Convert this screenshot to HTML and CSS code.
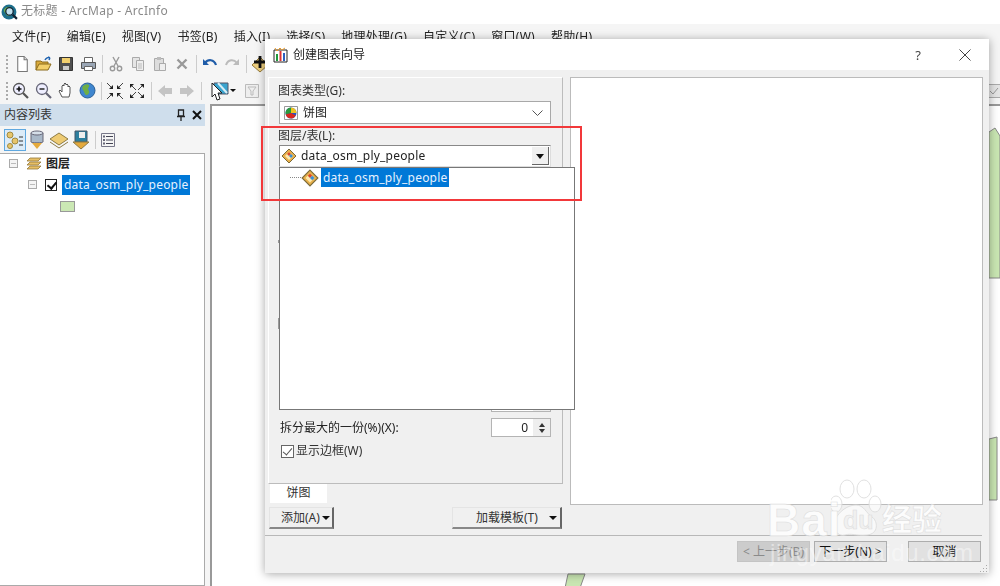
FILE: index.html
```html
<!DOCTYPE html>
<html lang="zh">
<head>
<meta charset="utf-8">
<title>无标题 - ArcMap - ArcInfo</title>
<link rel="stylesheet" href="styles.css">
</head>
<body>
<svg class="defs" width="0" height="0">
  <defs>
    <symbol id="diamond" viewBox="0 0 16 16"><path d="M8 1 15 8 8 15 1 8Z" fill="#e8b04a" stroke="#7a6a3a"/><path d="M8 4 12 8 8 12 4 8Z" fill="#fbe9b0"/><path d="M8 4 10 6 8 8 6 6Z" fill="#d9482b"/><path d="M10 6 12 8 10 10 8 8Z" fill="#3c8fd0"/></symbol>
    <symbol id="corner-in" viewBox="0 0 7 7"><path d="M0 0 4 4" stroke="#444" stroke-width="1"/><path d="M6 2v4H2Z" fill="#222"/></symbol>
    <symbol id="corner-out" viewBox="0 0 7 7"><path d="M7 7 3 3" stroke="#444" stroke-width="1"/><path d="M1 5V1h4Z" fill="#222"/></symbol>
  </defs>
</svg>
<div class="app">
  <header class="titlebar">
    <svg class="app-logo" width="17" height="17" viewBox="0 0 16 16"><circle cx="7.500" cy="7.500" r="7" fill="#1d6f8c"/><path d="M3 5c2-3 6-3 7-1s-2 3-1 5-3 3-4 1-3-3-2-5Z" fill="#6fb04a"/><circle cx="8" cy="7" r="3.500" fill="#bfe0ee" stroke="#123" stroke-width="1.200"/><path d="m11 10 4 4" stroke="#123" stroke-width="2"/></svg>
    <span class="title-text">无标题 - ArcMap - ArcInfo</span>
  </header>
  <nav class="menubar">
    <span>文件(F)</span><span>编辑(E)</span><span>视图(V)</span><span>书签(B)</span><span>插入(I)</span><span>选择(S)</span><span>地理处理(G)</span><span>自定义(C)</span><span>窗口(W)</span><span>帮助(H)</span>
  </nav>
  <div class="toolbar">
    <i class="grip"></i>
    <span class="tool"><svg width="17" height="18" viewBox="0 0 16 17"><path d="M3.500 1.500h6l3 3v11h-9Z" fill="#fff" stroke="#777"/><path d="M9.500 1.500v3h3" fill="#ddd" stroke="#777"/></svg></span>
    <span class="tool"><svg width="18" height="16" viewBox="0 0 18 16"><path d="M1 14V5h5l1 1h6v2" fill="#d9a93a" stroke="#8a6a1c"/><path d="M1 14 4 8h12l-3 6Z" fill="#f3cf6a" stroke="#8a6a1c"/><path d="M10 4c1-2 3-3 5-2m0 0-2-1m2 1-1 2" fill="none" stroke="#1e62b0" stroke-width="1.500"/></svg></span>
    <span class="tool"><svg width="16" height="16" viewBox="0 0 16 16"><path d="M1.500 1.500h13v13h-13Z" fill="#4f4f4f" stroke="#333"/><path d="M4 2h8v5H4Z" fill="#f1cf6e"/><path d="M5 10h6v4H5Z" fill="#ccc"/></svg></span>
    <span class="tool"><svg width="17" height="16" viewBox="0 0 17 16"><path d="M4.500 1.500h8v5h-8Z" fill="#fff" stroke="#666"/><path d="M1.500 6.500h14v6h-14Z" fill="#9aa6b5" stroke="#555"/><path d="M4.500 10.500h8v4h-8Z" fill="#fff" stroke="#666"/></svg></span>
    <i class="sep"></i>
    <span class="tool dim"><svg width="16" height="16" viewBox="0 0 16 16"><path d="m5 1 5 9M11 1l-5 9" stroke="#999" stroke-width="1.400"/><circle cx="4.500" cy="12.500" r="2.200" fill="none" stroke="#999" stroke-width="1.400"/><circle cx="11.500" cy="12.500" r="2.200" fill="none" stroke="#999" stroke-width="1.400"/></svg></span>
    <span class="tool dim"><svg width="16" height="16" viewBox="0 0 16 16"><path d="M2.500 1.500h7v10h-7Z" fill="#e5e5e5" stroke="#aaa"/><path d="M6.500 4.500h7v10h-7Z" fill="#eee" stroke="#aaa"/><path d="M8 8h4M8 10h4M8 12h4" stroke="#bbb"/></svg></span>
    <span class="tool dim"><svg width="16" height="16" viewBox="0 0 16 16"><path d="M2.500 2.500h9v12h-9Z" fill="#ddd" stroke="#aaa"/><path d="M5 1h4v3H5Z" fill="#bbb"/><path d="M7.500 7.500h6v7h-6Z" fill="#eee" stroke="#aaa"/></svg></span>
    <span class="tool dim"><svg width="14" height="14" viewBox="0 0 14 14"><path d="m2.500 2.500 9 9m0-9-9 9" stroke="#999" stroke-width="2.400"/></svg></span>
    <i class="sep"></i>
    <span class="tool"><svg width="16" height="14" viewBox="0 0 16 14"><path d="M3 6c3-4 9-4 11 2" fill="none" stroke="#1f5ca8" stroke-width="2.200"/><path d="M1 2v6h6Z" fill="#1f5ca8"/></svg></span>
    <span class="tool dim"><svg width="16" height="14" viewBox="0 0 16 14"><path d="M13 6C10 2 4 2 2 8" fill="none" stroke="#bbb" stroke-width="2"/><path d="M15 2v6H9Z" fill="#bbb"/></svg></span>
    <i class="sep"></i>
    <span class="tool"><svg width="18" height="18" viewBox="0 0 18 18"><path d="M9 2 17 10 9 17 1 10Z" fill="#eecf7e" stroke="#94793a"/><path d="M9 1v12M3 7h12" stroke="#111" stroke-width="2.800"/></svg></span>
  </div>
  <div class="toolbar">
    <i class="grip"></i>
    <span class="tool tool-first"><svg width="17" height="17" viewBox="0 0 17 17"><circle cx="7" cy="7" r="5.500" fill="#eef" stroke="#555" stroke-width="1.300"/><path d="M4.500 7h5M7 4.500v5" stroke="#111" stroke-width="1.600"/><path d="m11 11 5 5" stroke="#555" stroke-width="2.200"/></svg></span>
    <span class="tool"><svg width="17" height="17" viewBox="0 0 17 17"><circle cx="7" cy="7" r="5.500" fill="#eef" stroke="#667" stroke-width="1.300"/><path d="M4.500 7h5" stroke="#333" stroke-width="1.600"/><path d="m11 11 5 5" stroke="#667" stroke-width="2.200"/></svg></span>
    <span class="tool"><svg width="17" height="17" viewBox="0 0 17 17"><path d="M5 15 2 9l1-1 2 2V4l1-1 1 1V2l1-1 1 1v1l1-1 1 1v2l1-1 1 1v6l-1 4Z" fill="#fff" stroke="#555"/></svg></span>
    <span class="tool"><svg width="17" height="17" viewBox="0 0 17 17"><circle cx="8.500" cy="8.500" r="7.500" fill="#3f86cf" stroke="#2a5f95"/><path d="M4 4c2-2 5-2 6-1s-1 3-1 4 2 2 1 4-3 3-4 1-1-3-2-4-1-3 0-4Z" fill="#6fae45"/></svg></span>
    <i class="sep"></i>
    <span class="tool"><svg width="16" height="16" viewBox="0 0 16 16"><use href="#corner-in" x="0" y="0" width="7" height="7"/><use href="#corner-in" x="0" y="0" width="7" height="7" transform="matrix(-1 0 0 1 16 0)"/><use href="#corner-in" x="0" y="0" width="7" height="7" transform="matrix(1 0 0 -1 0 16)"/><use href="#corner-in" x="0" y="0" width="7" height="7" transform="matrix(-1 0 0 -1 16 16)"/></svg></span>
    <span class="tool"><svg width="16" height="16" viewBox="0 0 16 16"><use href="#corner-out" x="0" y="0" width="7" height="7"/><use href="#corner-out" x="0" y="0" width="7" height="7" transform="matrix(-1 0 0 1 16 0)"/><use href="#corner-out" x="0" y="0" width="7" height="7" transform="matrix(1 0 0 -1 0 16)"/><use href="#corner-out" x="0" y="0" width="7" height="7" transform="matrix(-1 0 0 -1 16 16)"/></svg></span>
    <i class="sep"></i>
    <span class="tool dim"><svg width="16" height="14" viewBox="0 0 16 14"><path d="M1 7 8 1v3h7v6H8v3Z" fill="#c4c4c4"/></svg></span>
    <span class="tool dim"><svg width="16" height="14" viewBox="0 0 16 14"><path d="M15 7 8 1v3H1v6h7v3Z" fill="#c4c4c4"/></svg></span>
    <i class="sep"></i>
    <span class="tool tool-select"><svg width="20" height="20" viewBox="0 0 20 20"><path d="M4 2h14v11H4Z" fill="#3aa4cf" stroke="#556"/><path d="M8 2l9 10" stroke="#d8eef6" stroke-width="2"/><path d="M2 2v14l3-3 2 6 3-1-2-6h4Z" fill="#fff" stroke="#222"/></svg></span>
    <span class="caret-tool"></span>
    <span class="tool tool-clear dim"><svg width="14" height="14" viewBox="0 0 14 14"><path d="M.5.500h13v13H.5Z" fill="#eee" stroke="#bbb"/><path d="M3 3h8L8 7v4H6V7Z" fill="none" stroke="#bbb"/></svg></span>
    <i class="sep"></i>
    <span class="tool tool-end dim"><svg width="14" height="14" viewBox="0 0 14 14"><path d="M.5.500h13v13H.5Z" fill="#e4e4e4" stroke="#aaa"/><path d="m3 7 3 3 5-6" fill="none" stroke="#999"/></svg></span>
  </div>

  <main class="workspace">
    <aside class="toc">
      <div class="toc-head"><span>内容列表</span>
        <svg width="26" height="12" viewBox="0 0 26 12"><path d="M2.500 1h5v6h-5ZM1 7.500h8M5 8v4" fill="none" stroke="#222" stroke-width="1.300"/><path d="m17 2 8 8m0-8-8 8" stroke="#111" stroke-width="2"/></svg>
      </div>
      <div class="toc-tabs">
        <span class="toc-tab active"><svg width="18" height="18" viewBox="0 0 18 18"><circle cx="4" cy="4" r="3" fill="#e8c66c" stroke="#a08a40"/><circle cx="9" cy="10" r="3" fill="#e8c66c" stroke="#a08a40"/><circle cx="4" cy="15" r="2.500" fill="#e8c66c" stroke="#a08a40"/><path d="M13 6h4M13 10h4M13 14h4" stroke="#333"/></svg></span>
        <span class="toc-tab"><svg width="18" height="20" viewBox="0 0 18 20"><path d="M3 3v9c0 1 12 1 12 0V3Z" fill="#a9b8c8" stroke="#667"/><ellipse cx="9" cy="3" rx="6" ry="2" fill="#d5dee8" stroke="#667"/><path d="M4 13h10l-5 6Z" fill="#e4a93c"/></svg></span>
        <span class="toc-tab"><svg width="20" height="18" viewBox="0 0 20 18"><path d="M10 2 19 8l-9 6L1 8Z" fill="#eecb73" stroke="#8c7a44"/><path d="M1 11l9 6 9-6" fill="none" stroke="#8c7a44"/></svg></span>
        <span class="toc-tab"><svg width="18" height="20" viewBox="0 0 18 20"><path d="M3 1h12v11H3Z" fill="#2d7f9e" stroke="#456"/><path d="M7 2h6v6H7Z" fill="#eee"/><path d="M1 12h16l-8 7Z" fill="#e4a93c" stroke="#8c7a44"/></svg></span>
        <i class="sep sep-toc"></i>
        <span class="toc-tab"><svg width="16" height="16" viewBox="0 0 16 16"><path d="M1.500 1.500h13v13h-13Z" fill="#f5f5f5" stroke="#778"/><path d="M6 4.500h7M6 8h7M6 11.500h7" stroke="#445"/><path d="M3 3.500h2v2H3ZM3 7h2v2H3ZM3 10.500h2v2H3Z" fill="#667"/></svg></span>
      </div>
      <div class="tree">
        <div class="tree-row row-root">
          <span class="expander"></span>
          <svg width="17" height="14" viewBox="0 0 17 14"><path d="M5 1h11l-3 3H2ZM5 5h11l-3 3H2ZM5 9h11l-3 3H2Z" fill="#e7bf65" stroke="#94793a" stroke-width=".8"/></svg>
          <b class="layer-name">图层</b>
        </div>
        <div class="tree-row row-layer">
          <span class="expander"></span>
          <span class="check-black"></span>
          <span class="selected-name">data_osm_ply_people</span>
        </div>
        <div class="tree-row row-swatch"><span class="swatch"></span></div>
      </div>
    </aside>
    <section class="map">
      <svg class="map-shapes" width="789" height="482" viewBox="0 0 789 482">
        <path d="M777 26 783 22 788 30V172H777Z" fill="#c9e6b2" stroke="#888"/>
        <path d="M777 333 785 331V394H777Z" fill="#c9e6b2" stroke="#888"/>
        <path d="M356 468H373L368 482H353Z" fill="#c9e6b2" stroke="#888"/>
      </svg>
    </section>
  </main>
</div>

<section class="dialog">
  <div class="dlg-title">
    <svg width="15" height="16" viewBox="0 0 15 16"><path d="M1 15V3h13v12Z" fill="#fff" stroke="#222"/><path d="M3 14V7h2v7Z" fill="#1f9a3c"/><path d="M6.500 14V4h2v10Z" fill="#d33"/><path d="M10 14V6h2v8Z" fill="#2a5fc0"/><path d="M2 1l2 3 3-3 2 2 3-2" fill="none" stroke="#e89a2a"/></svg>
    <span>创建图表向导</span>
    <span class="dlg-help">?</span>
    <svg class="dlg-close" width="12" height="12" viewBox="0 0 12 12"><path d="m.5.500 11 11m0-11-11 11" stroke="#444"/></svg>
  </div>
  <div class="dlg-body">
    <div class="dlg-left">
      <div class="group">
        <label class="field-label">图表类型(G):</label>
        <div class="combo combo-type">
          <svg width="16" height="16" viewBox="0 0 16 16"><path d="M1.500 1.500h13v13h-13Z" fill="#fff" stroke="#999"/><circle cx="8" cy="8" r="5.500" fill="#2a52c0"/><path d="M8 8V2.500A5.500 5.500 0 0 0 2.700 9.500Z" fill="#2b9a3c"/><path d="M8 8 2.700 9.500A5.500 5.500 0 0 0 12.800 10.500Z" fill="#d8281e"/><path d="M8 8V2.500A5.500 5.500 0 0 1 13.500 8Z" fill="#eec21f"/></svg>
          <span>饼图</span>
          <svg class="chev" width="11" height="6" viewBox="0 0 11 6"><path d="m.5.500 5 5 5-5" fill="none" stroke="#555"/></svg>
        </div>
        <label class="field-label label-layer">图层/表(L):</label>
        <div class="combo combo-layer">
          <svg width="16" height="16" viewBox="0 0 16 16"><use href="#diamond"/></svg>
          <span class="latin">data_osm_ply_people</span>
          <span class="drop-btn"></span>
        </div>
        <i class="peek peek-a"></i>
        <i class="peek peek-b"></i>
        <div class="group-rest">
          <div class="spin-row"><span></span><span class="spin"><span class="spin-val"></span><span class="spin-btns"></span></span></div>
          <div class="spin-row"><span>拆分最大的一份(%)(X):</span><span class="spin"><span class="spin-val">0</span><span class="spin-btns"><i class="up"></i><i class="down"></i></span></span></div>
          <div class="check-row"><span class="check-grey"></span><span>显示边框(W)</span></div>
        </div>
        <div class="dropdown">
          <div class="drop-item"><i class="dots"></i><svg width="18" height="18" viewBox="0 0 16 16"><use href="#diamond"/></svg><span class="selected-name">data_osm_ply_people</span></div>
        </div>
      </div>
      <div class="tabs"><span class="tab">饼图</span></div>
      <div class="left-actions">
        <span class="btn-flat btn-add">添加(A)<i class="tri"></i></span>
        <span class="btn-flat btn-load">加载模板(T)<i class="tri"></i></span>
      </div>
    </div>
    <div class="preview"></div>
  </div>
  <div class="dlg-foot">
    <span class="btn disabled">&lt; 上一步(B)</span>
    <span class="btn">下一步(N) &gt;</span>
    <span class="btn btn-cancel">取消</span>
    <i class="resize-grip"></i>
  </div>
</section>

<div class="red-box"></div>

<div class="watermark">
  <svg class="paw" width="60" height="70" viewBox="0 0 60 70"><g fill="#fff" fill-opacity=".75" stroke="#ddd"><ellipse cx="16" cy="11" rx="7" ry="9"/><ellipse cx="33" cy="11" rx="7" ry="9"/><ellipse cx="5" cy="26" rx="6" ry="8"/><ellipse cx="44" cy="26" rx="6" ry="8"/><path d="M25 27c8 0 10 8 16 12s7 17-5 18-15-2-22 0-14-6-10-15 13-15 21-15Z"/></g></svg>
  <span class="wm-bai">Bai</span>
  <span class="wm-du">du</span>
  <span class="wm-cn">经验</span>
  <span class="wm-url">jingyan.baidu.com</span>
</div>
</body>
</html>
```
FILE: styles.css
```css
* { box-sizing: border-box; }
html, body { margin: 0; height: 586px; overflow: hidden; }
body {
  position: relative;
  width: 1000px;
  background: #f5f5f5;
  font: 12px/16px "Noto Sans", "Noto Sans CJK SC", sans-serif;
  color: #222;
  filter: blur(.6px);
}
.defs { position: absolute; }
.app { display: flex; flex-direction: column; height: 586px; }

.titlebar { height: 24px; background: #fff; display: flex; align-items: center; gap: 3px; padding-left: 1px; flex: none; }
.title-text { color: #8a8a8a; letter-spacing: .3px; position: relative; top: -1px; }

.menubar { height: 26px; display: flex; gap: 16px; align-items: center; padding: 0 0 0 12px; flex: none; letter-spacing: .25px; }
.menubar span { white-space: nowrap; }

.toolbar { height: 27px; display: flex; align-items: center; padding-left: 6px; flex: none; }
.grip { width: 2px; height: 18px; margin-right: 3px; background: repeating-linear-gradient(#aaa 0 2px, transparent 2px 4px); flex: none; }
.tool { width: 22px; display: flex; justify-content: center; align-items: center; height: 22px; flex: none; }
.tool-first { margin-left: -2px; margin-right: 1px; }
.sep { width: 1px; height: 18px; background: #ccc; margin: 0 2.5px; flex: none; }
.tool-select { width: 20px; margin-left: 6px; }
.caret-tool { width: 0; height: 0; border: 3px solid transparent; border-top: 3px solid #111; border-bottom: 0; margin: 0 6px 0 0; flex: none; }
.tool-clear { width: 20px; }
.tool-end { margin-left: auto; margin-right: -5px; }

.workspace { flex: 1; display: flex; min-height: 0; margin-top: -1px; }
.toc { width: 205px; flex: none; display: flex; flex-direction: column; }
.toc-head { height: 22px; margin-top: 1px; background: #cfdeec; display: flex; align-items: center; justify-content: space-between; padding: 0 3px 0 4px; color: #333; }
.toc-tabs { height: 27px; display: flex; align-items: center; padding-left: 4px; gap: 0; }
.toc-tab { width: 22px; height: 22px; display: flex; align-items: center; justify-content: center; flex: none; }
.toc-tab.active { background: #dcebf7; border: 1px solid #5fa8e0; }
.sep-toc { margin: 0 1px 0 3px; }
.tree { flex: 1; background: #fff; border: 1px solid #aaa; border-left: 0; }
.tree-row { display: flex; align-items: center; }
.row-root { height: 19px; padding-left: 9px; gap: 7px; }
.expander { width: 9px; height: 9px; border: 1px solid #aaa; background: linear-gradient(#bbb, #bbb) center / 5px 1px no-repeat #f4f4f4; flex: none; }
.layer-name { font-weight: 700; color: #222; margin-left: -3px; }
.row-layer { height: 21px; padding-left: 28px; margin-top: 1px; }
.check-black { width: 12px; height: 12px; border: 1px solid #222; margin-left: 8px; background: #fff; position: relative; flex: none; }
.check-black::after { content: ""; position: absolute; left: 3px; top: 0; width: 4px; height: 7px; border: solid #111; border-width: 0 2px 2px 0; transform: rotate(40deg); }
.selected-name { background: #0078d7; color: #e6f2ff; padding: 0 2px; line-height: 19px; height: 19px; display: inline-block; white-space: nowrap; letter-spacing: .2px; }
.latin { letter-spacing: .2px; }
.row-layer .selected-name { margin-left: 5px; line-height: 20px; height: 20px; }
.row-swatch { height: 17px; padding: 5px 0 0 60px; }
.swatch { width: 15px; height: 11px; background: #cbe8b4; border: 1px solid #999; display: block; }

.map { flex: 1; margin-left: 5px; margin-top: 1px; background: #fff; border-top: 2px solid #999; border-left: 2px solid #999; position: relative; overflow: hidden; }
.map-shapes { position: absolute; left: 0; top: 0; }

.dialog {
  position: absolute; left: 265px; top: 39px; width: 724px; height: 534px;
  background: #f0f0f0; box-shadow: 0 1px 9px rgba(0,0,0,.35);
  display: flex; flex-direction: column;
}
.dlg-title { height: 31px; background: #fff; display: flex; align-items: center; padding: 0 18px 0 8px; gap: 5px; flex: none; }
.dlg-help { margin-left: auto; margin-right: 33px; font-size: 13px; color: #444; }
.dlg-body { flex: 1; display: flex; padding: 7px 6px 0 3px; gap: 7px; min-height: 0; }
.dlg-left { width: 295px; flex: none; display: flex; flex-direction: column; }
.group { height: 407px; border: 1px solid #fff; border-right: 1px solid #bcbcbc; border-bottom: 1px solid #bcbcbc; position: relative; padding: 5px 11px 0 10px; display: flex; flex-direction: column; }
.field-label { display: block; height: 16px; color: #333; margin-left: -1px; }
.combo { display: flex; align-items: center; background: #fff; }
.combo-type { height: 23px; margin-top: 2px; border: 1px solid #a8a8a8; padding-left: 3px; gap: 4px; }
.chev { margin-left: auto; margin-right: 7px; }
.label-layer { margin-top: 4px; }
.combo-layer { height: 22px; margin-top: 1px; border: 1px solid #888; border-right-color: #ddd; border-bottom-color: #ddd; padding-left: 1px; gap: 4px; }
.drop-btn { margin-left: auto; width: 17px; height: 18px; margin-right: 1px; background: #f0f0f0; border-right: 1px solid #666; border-bottom: 1px solid #666; position: relative; }
.drop-btn::after { content: ""; position: absolute; left: 4px; top: 7px; border: 4px solid transparent; border-top: 5px solid #111; border-bottom: 0; }
.peek { position: absolute; left: 9px; width: 1px; background: #999; }
.peek-a { top: 162px; height: 3px; }
.peek-b { top: 240px; height: 11px; }
.group-rest { margin-top: auto; padding-bottom: 24px; display: flex; flex-direction: column; }
.spin-row { display: flex; justify-content: space-between; align-items: center; height: 19px; margin-bottom: 6px; padding-left: 1px; }
.spin { width: 60px; height: 19px; display: flex; border: 1px solid #b4b4b4; background: #fff; }
.spin-val { flex: 1; text-align: right; padding-right: 5px; line-height: 17px; }
.spin-btns { width: 17px; background: #eee; display: flex; flex-direction: column; align-items: center; justify-content: center; gap: 2px; }
.up { border: 3px solid transparent; border-top: 0; border-bottom: 4px solid #333; }
.down { border: 3px solid transparent; border-bottom: 0; border-top: 4px solid #333; }
.check-row { display: flex; align-items: center; gap: 2px; height: 16px; padding-left: 2px; color: #333; }
.check-grey { width: 13px; height: 13px; border: 1px solid #666; background: #fff; position: relative; }
.check-grey::after { content: ""; position: absolute; left: 3px; top: 0; width: 4px; height: 8px; border: solid #555; border-width: 0 1px 1px 0; transform: rotate(40deg); }
.dropdown { position: absolute; left: 10px; top: 89px; width: 296px; height: 243px; background: #fff; border: 1px solid #777; z-index: 2; }
.drop-item { display: flex; align-items: center; height: 19px; padding-left: 10px; }
.dots { width: 11px; border-top: 1px dotted #888; }
.drop-item svg { margin-right: 2px; }
.tabs { height: 20px; padding-left: 2px; flex: none; }
.tab { display: block; width: 57px; height: 19px; background: #fff; text-align: center; color: #333; line-height: 18px; }
.left-actions { display: flex; justify-content: space-between; margin-top: 3px; padding: 0 1px; }
.btn-flat { height: 22px; background: #f0f0f0; border: 1px solid #e4e4e4; border-right: 2px solid #666; border-bottom: 2px solid #888; display: flex; align-items: center; color: #333; position: relative; }
.btn-add { width: 65px; padding-left: 11px; }
.btn-load { width: 110px; padding-left: 23px; }
.tri { border: 4px solid transparent; border-top: 4px solid #111; border-bottom: 0; position: absolute; right: 2px; top: 8px; }
.btn-load .tri { right: 3px; }
.preview { flex: 1; height: 428px; background: #fff; border: 1px solid #bbb; }
.dlg-foot { height: 38px; margin: 0 7px 0 0; border-top: 1px solid #b8b8b8; display: flex; align-items: center; padding: 0 1px 6px 472px; flex: none; position: relative; }
.btn { width: 73px; height: 21px; border: 1px solid #adadad; background: #e1e1e1; text-align: center; line-height: 19px; color: #111; margin-right: 4px; flex: none; }
.btn.disabled { background: #ccc; color: #8a8a8a; border-color: #c4c4c4; }
.btn-cancel { margin-left: 17px; margin-right: 0; }
.resize-grip { position: absolute; right: -5px; bottom: 1px; width: 8px; height: 8px; background: radial-gradient(#aaa 1px, transparent 1px) 0 0 / 3px 3px; clip-path: polygon(100% 0, 100% 100%, 0 100%); }

.red-box { position: absolute; left: 261px; top: 126px; width: 321px; height: 75px; border: 2px solid #f2383a; z-index: 5; }

.watermark { position: absolute; left: 760px; top: 470px; width: 200px; height: 100px; z-index: 6; color: #fff; font-family: "Liberation Sans", "Noto Sans CJK SC", sans-serif; opacity: .85; }
.paw { position: absolute; left: 71px; top: 8px; }
.watermark span { position: absolute; white-space: nowrap; -webkit-text-stroke: .5px #d8d8d8; }
.wm-bai { left: 7px; top: 27px; font-size: 46px; line-height: 46px; font-weight: 700; letter-spacing: 1px; }
.wm-du { left: 83px; top: 37px; font-size: 25px; line-height: 26px; color: #f0f0f0; font-weight: 700; }
.wm-cn { left: 122px; top: 33px; font-size: 30px; line-height: 34px; font-weight: 700; }
.watermark .wm-url { left: 10px; top: 70px; font-size: 24px; line-height: 26px; letter-spacing: .6px; color: rgba(255,255,255,.55); -webkit-text-stroke: 0; }
```
